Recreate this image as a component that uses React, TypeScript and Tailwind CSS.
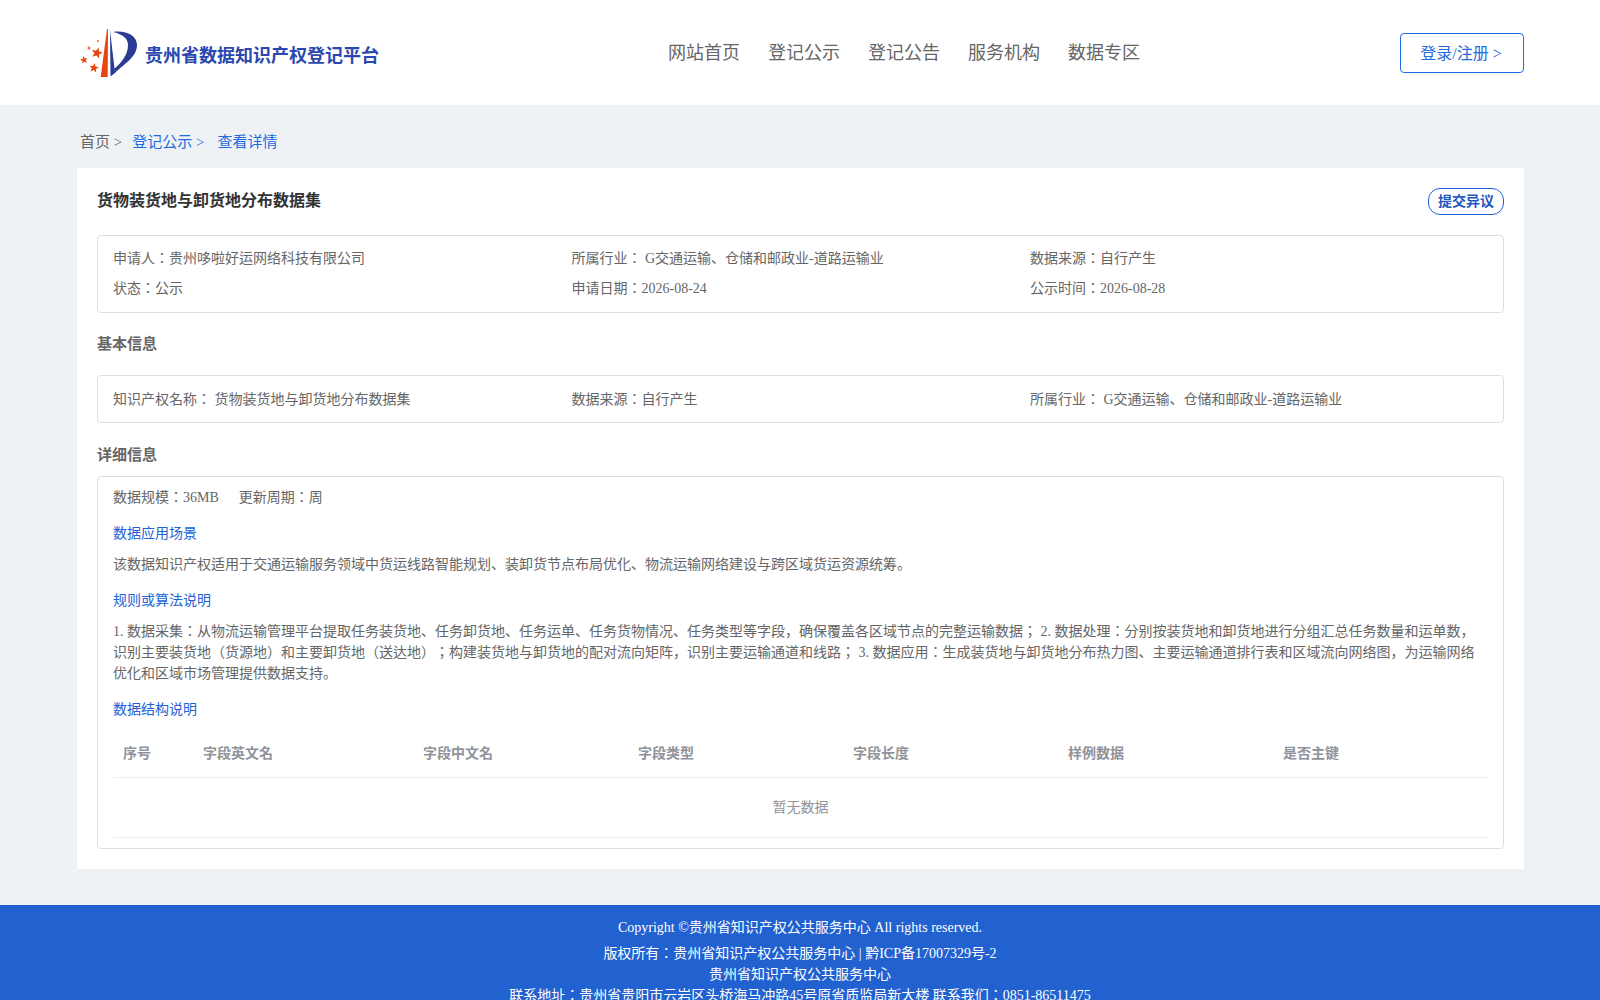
const font = "font-['Liberation_Serif','Noto_Sans_CJK_JP',serif] [text-spacing-trim:space-all]";

const columns = [
  { label: "序号", width: "w-[80px]" },
  { label: "字段英文名", width: "w-[220px]" },
  { label: "字段中文名", width: "w-[215px]" },
  { label: "字段类型", width: "w-[215px]" },
  { label: "字段长度", width: "w-[215px]" },
  { label: "样例数据", width: "w-[215px]" },
  { label: "是否主键", width: "flex-1" },
];

function starPoints(cx: number, cy: number, r: number, turn: number) {
  const pts: string[] = [];
  for (let i = 0; i < 10; i++) {
    const rad = i % 2 === 0 ? r : r * 0.42;
    const a = ((-90 + turn + i * 36) * Math.PI) / 180;
    pts.push(`${(cx + rad * Math.cos(a)).toFixed(2)},${(cy + rad * Math.sin(a)).toFixed(2)}`);
  }
  return pts.join(" ");
}

function Logo() {
  return (
    <svg width="60" height="52" viewBox="0 0 60 52" className="shrink-0">
      <path d="M20.7 50 L27 2 L28 2 L27.7 50 Z" fill="#e8450f" />
      <path d="M30 3 L30.5 49.5 L35 46 Z" fill="#2b3a92" />
      <path
        d="M33 5 C45 3 57 8 57 18 C57 30 44 37 35 46 L34 42 C41 36 48 28 48 18 C48 11 42 7 33 5 Z"
        fill="#2b3a92"
      />
      <polygon points={starPoints(17, 26, 6, 15)} fill="#e8450f" />
      <polygon points={starPoints(4, 33, 4, -10)} fill="#e8450f" />
      <polygon points={starPoints(14, 41, 5, 10)} fill="#e8450f" />
      <circle cx="9" cy="21" r="1.5" fill="#ee6a3c" />
      <circle cx="18" cy="14" r="1" fill="#ee6a3c" />
    </svg>
  );
}

function Header() {
  return (
    <header className="h-[105px] bg-white pl-[77px] pr-[76px] flex items-start">
      <div className="w-[591px] flex items-center pt-[27px] pl-[3px]">
        <Logo />
        <span className="text-[18px] font-bold text-[#2a48b0] ml-[5px] mt-[7px]">
          贵州省数据知识产权登记平台
        </span>
      </div>
      <nav className="flex gap-[28px] pt-[38px] text-[18px] leading-[30px] text-[#666]">
        <a>网站首页</a>
        <a>登记公示</a>
        <a>登记公告</a>
        <a>服务机构</a>
        <a>数据专区</a>
      </nav>
      <button className="ml-auto mt-[33px] h-[40px] w-[124px] rounded-[4px] border border-[#1f6be0] pr-[2px] pt-[2px] text-[16px] text-[#1f6be0]">
        登录/注册 &gt;
      </button>
    </header>
  );
}

function Cell({ children }: { children: React.ReactNode }) {
  return <div className="w-[458.5px] shrink-0 whitespace-pre">{children}</div>;
}

function Table() {
  return (
    <div className="mt-[8px]">
      <div className="flex h-[50px] items-center border-b border-[#ebeef5] pt-[2px] text-[14px] font-bold text-[#909399]">
        {columns.map((c) => (
          <div key={c.label} className={`${c.width} pl-[10px]`}>
            {c.label}
          </div>
        ))}
      </div>
      <div className="h-[60px] flex items-center justify-center border-b border-[#ebeef5] text-[14px] text-[#909399]">
        暂无数据
      </div>
    </div>
  );
}

export default function App() {
  return (
    <div className={`${font} bg-[#eff2f5] min-h-screen text-[14px] text-[#666]`}>
      <Header />
      <main className="pl-[77px] pr-[76px]">
        <div className="h-[63px] pt-[26px] pl-[3px] text-[15px] leading-[22px] flex">
          <span>首页 &gt;</span>
          <span className="text-[#1f6be0] ml-[10px]">登记公示 &gt;</span>
          <span className="text-[#1f6be0] ml-[13px]">查看详情</span>
        </div>

        <section className="bg-white px-[20px] pt-[20px] pb-[20px]">
          <div className="flex items-start justify-between h-[47px]">
            <h1 className="text-[16px] font-bold text-[#333] leading-[26px]">
              货物装货地与卸货地分布数据集
            </h1>
            <button className="h-[27px] w-[76px] rounded-[12px] border border-[#2262d6] text-[14px] font-bold text-[#2257bd] bg-white">
              提交异议
            </button>
          </div>

          <div className="h-[78px] rounded-[4px] border border-[#dcdfe6] pl-[15px] pt-[8px] leading-[30px]">
            <div className="flex">
              <Cell>申请人：贵州哆啦好运网络科技有限公司</Cell>
              <Cell>所属行业： G交通运输、仓储和邮政业-道路运输业</Cell>
              <Cell>数据来源：自行产生</Cell>
            </div>
            <div className="flex">
              <Cell>状态：公示</Cell>
              <Cell>申请日期：2026-08-24</Cell>
              <Cell>公示时间：2026-08-28</Cell>
            </div>
          </div>

          <h2 className="h-[62px] pt-[20px] font-bold leading-[22px] text-[15px]">基本信息</h2>

          <div className="h-[48px] flex items-center rounded-[4px] border border-[#dcdfe6] pl-[15px]">
            <Cell>知识产权名称： 货物装货地与卸货地分布数据集</Cell>
            <Cell>数据来源：自行产生</Cell>
            <Cell>所属行业： G交通运输、仓储和邮政业-道路运输业</Cell>
          </div>

          <h2 className="h-[53px] pt-[21px] font-bold leading-[22px] text-[15px]">详细信息</h2>

          <div className="rounded-[4px] border border-[#dcdfe6] px-[15px] pb-[10px] pt-[10px] leading-[21px]">
            <p>
              数据规模：36MB<span className="ml-[20px]">更新周期：周</span>
            </p>
            <h3 className="mt-[15px] text-[#2262d6]">数据应用场景</h3>
            <p className="mt-[10px]">
              该数据知识产权适用于交通运输服务领域中货运线路智能规划、装卸货节点布局优化、物流运输网络建设与跨区域货运资源统筹。
            </p>
            <h3 className="mt-[15px] text-[#2262d6]">规则或算法说明</h3>
            <p className="mt-[10px]">
              1. 数据采集：从物流运输管理平台提取任务装货地、任务卸货地、任务运单、任务货物情况、任务类型等字段，确保覆盖各区域节点的完整运输数据； 2. 数据处理：分别按装货地和卸货地进行分组汇总任务数量和运单数，识别主要装货地（货源地）和主要卸货地（送达地）；构建装货地与卸货地的配对流向矩阵，识别主要运输通道和线路； 3. 数据应用：生成装货地与卸货地分布热力图、主要运输通道排行表和区域流向网络图，为运输网络优化和区域市场管理提供数据支持。
            </p>
            <h3 className="mt-[15px] text-[#2262d6]">数据结构说明</h3>
            <Table />
          </div>
        </section>
      </main>

      <footer className="mt-[36px] bg-[#2161d0] text-center text-white text-[14px] leading-[21px] pt-[12px] pb-[12px]">
        <p className="mb-[5px]">Copyright ©贵州省知识产权公共服务中心 All rights reserved.</p>
        <p>版权所有：贵州省知识产权公共服务中心 | 黔ICP备17007329号-2</p>
        <p>贵州省知识产权公共服务中心</p>
        <p>联系地址：贵州省贵阳市云岩区头桥海马冲路45号原省质监局新大楼 联系我们：0851-86511475</p>
      </footer>
    </div>
  );
}
